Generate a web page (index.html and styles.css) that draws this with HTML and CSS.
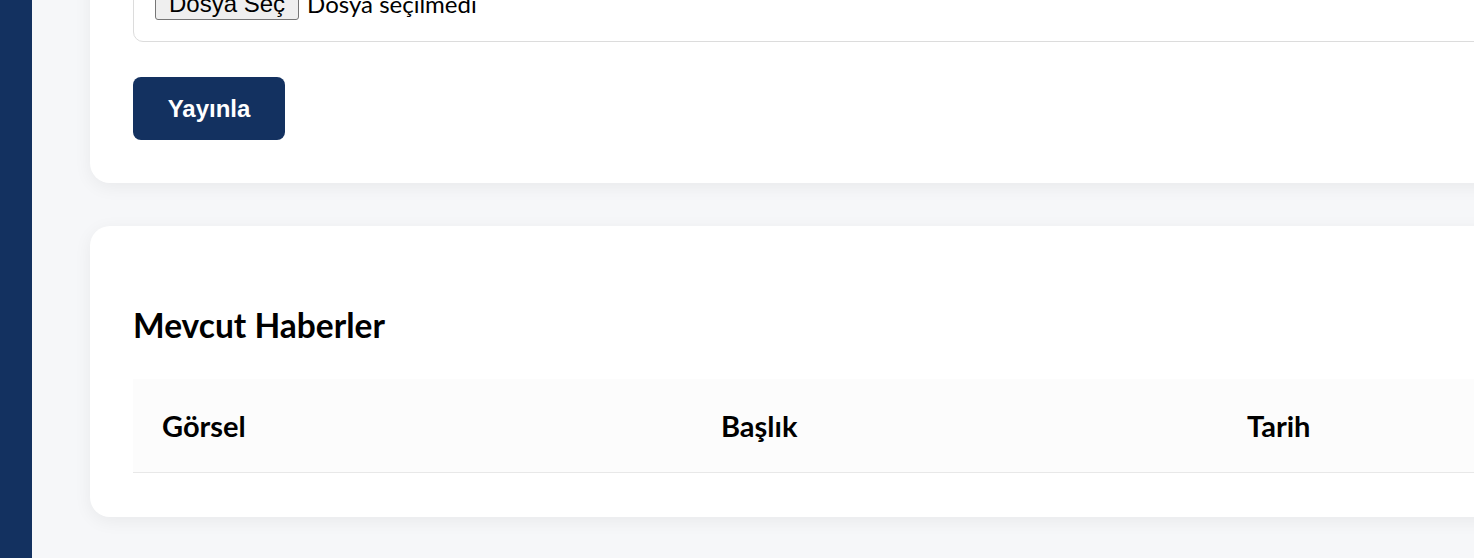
FILE: index.html
```html
<!DOCTYPE html>
<html lang="tr">
<head>
<meta charset="utf-8">
<title>Haberler</title>
<link rel="stylesheet" href="styles.css">
</head>
<body>
<div class="layout">
  <aside class="sidebar"></aside>
  <main class="main">
    <section class="card card-form">
      <div class="file-box">
        <span class="file-btn">Dosya Seç</span>
        <span class="file-label">Dosya seçilmedi</span>
      </div>
      <button class="btn-primary" type="button">Yayınla</button>
    </section>
    <section class="card card-list">
      <h2 class="section-title">Mevcut Haberler</h2>
      <table class="news-table">
        <thead>
          <tr>
            <th class="col-img">Görsel</th>
            <th class="col-title">Başlık</th>
            <th class="col-date">Tarih</th>
            <th class="col-actions">İşlemler</th>
          </tr>
        </thead>
        <tbody></tbody>
      </table>
    </section>
  </main>
</div>
</body>
</html>
```

FILE: styles.css
```css
* { box-sizing: border-box; }
html, body {
  margin: 0;
  padding: 0;
  overflow: hidden;
  background: #f6f7f9;
}
body {
  font-family: "Lato", "Liberation Sans", sans-serif;
  color: #000;
}
.layout {
  display: flex;
  min-height: 558px;
}
.sidebar {
  width: 32px;
  flex: 0 0 32px;
  background: #133160;
}
.main {
  flex: 0 0 auto;
  width: 1700px;
  padding: 0 0 0 58px;
  display: flex;
  flex-direction: column;
  gap: 43px;
}
.card {
  background: #fff;
  border-radius: 20px;
  box-shadow: 0 4px 18px rgba(0, 0, 0, 0.06);
  padding: 43px;
}
.card-form {
  margin-top: -77px;
  display: flex;
  flex-direction: column;
  align-items: flex-start;
  gap: 35px;
}
.file-box {
  width: 100%;
  border: 1px solid #dcdcdc;
  border-radius: 10px;
  padding: 21px 21px;
  display: flex;
  align-items: center;
  gap: 8px;
}
.file-btn {
  font-family: "Liberation Sans", Arial, sans-serif;
  font-size: 24px;
  line-height: 28px;
  padding: 1px 13px;
  background: #efefef;
  border: 1px solid #767676;
  border-radius: 3px;
  color: #000;
}
.file-label {
  font-size: 24px;
  line-height: 28px;
}
.btn-primary {
  font-family: "Liberation Sans", Arial, sans-serif;
  font-weight: 700;
  font-size: 24px;
  color: #fff;
  background: #133160;
  border: none;
  border-radius: 8px;
  width: 152px;
  height: 63px;
  padding: 0;
}
.card-list {
  padding-top: 78px;
  padding-bottom: 44px;
}
.section-title {
  margin: 0 0 33px;
  font-size: 33.5px;
  font-weight: 700;
  line-height: 42px;
}
.news-table {
  width: 100%;
  border-collapse: collapse;
  table-layout: fixed;
}
.news-table th {
  text-align: left;
  font-size: 29px;
  font-weight: 700;
  background: #fcfcfc;
  border-bottom: 1px solid #e8e8e8;
  padding: 30px 29px;
  line-height: 33px;
}
.col-img { width: 559px; }
.col-title { width: 526px; }
.col-date { width: 260px; }
```
